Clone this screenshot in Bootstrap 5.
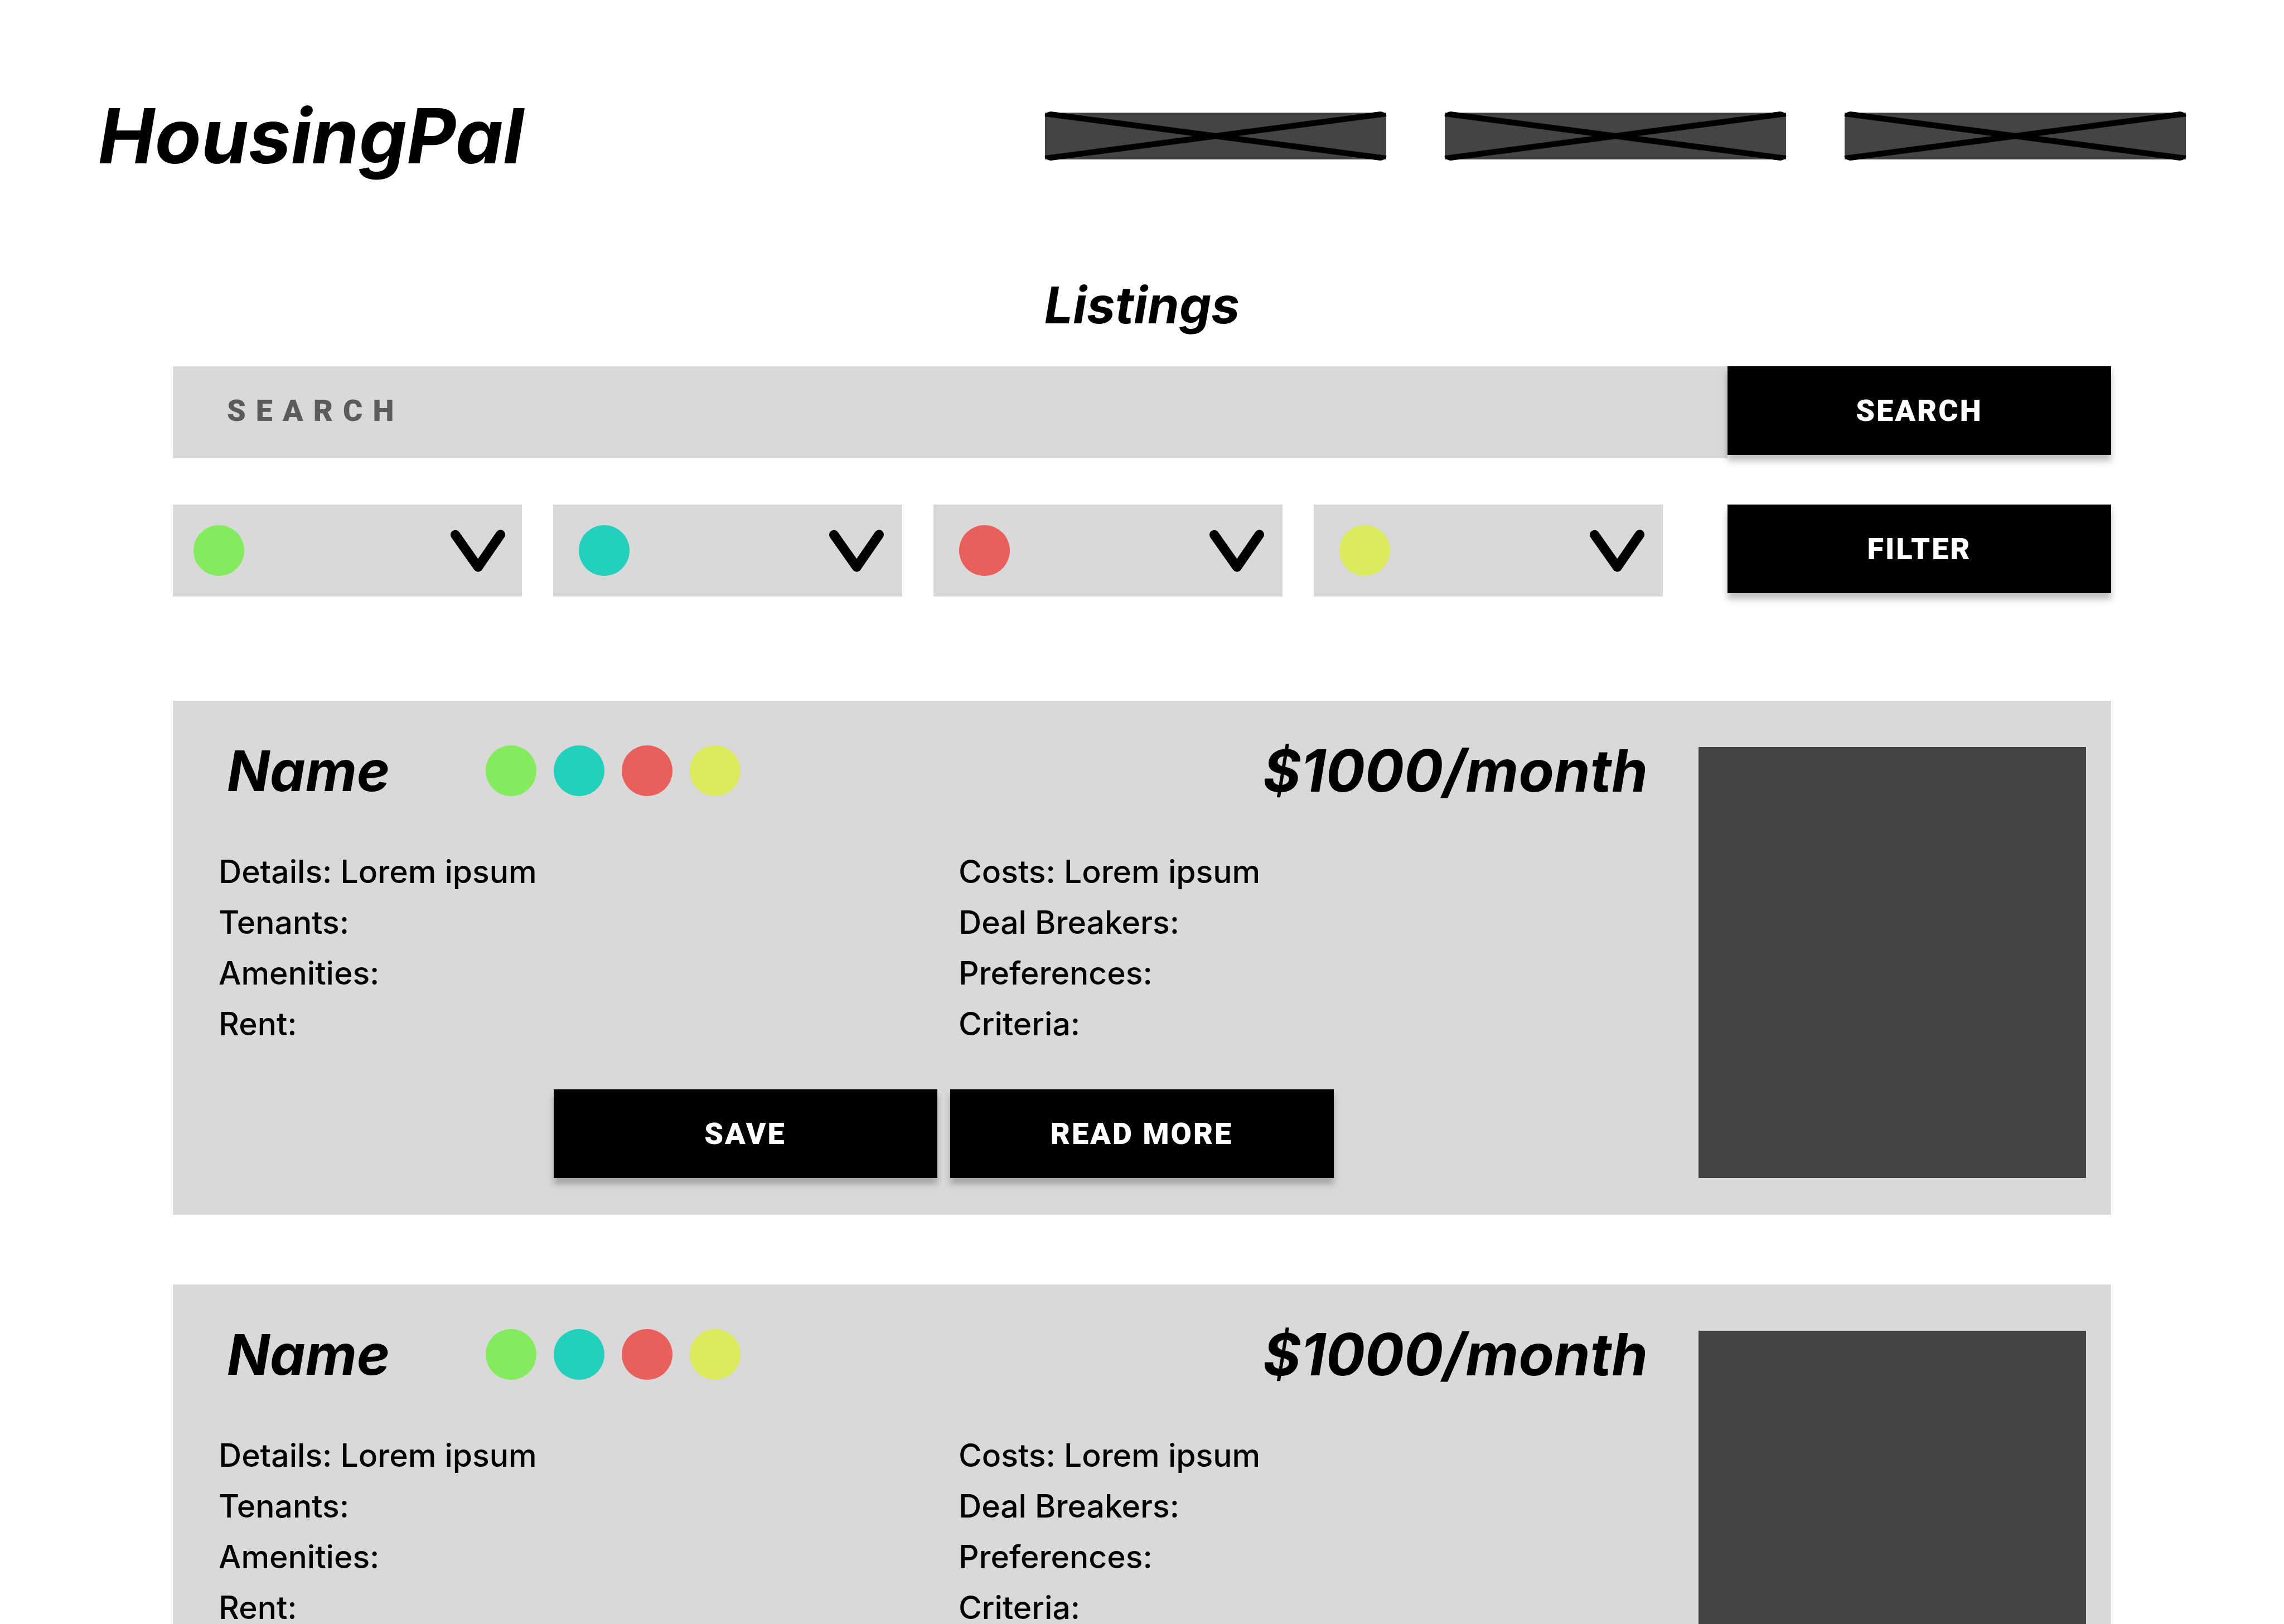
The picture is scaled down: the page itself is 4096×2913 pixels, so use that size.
<!DOCTYPE html>
<html lang="en">
<head>
<meta charset="utf-8">
<meta name="viewport" content="width=device-width, initial-scale=1">
<title>HousingPal - Listings</title>
<link href="https://cdn.jsdelivr.net/npm/bootstrap@5.3.0/dist/css/bootstrap.min.css" rel="stylesheet">
<style>
  body { font-family: Inter, sans-serif; color: #000; background: #fff; }
  .page-shell { scrollbar-width: none; }
  .site-header { padding: 162px 176px 166px; }
  .brand { font-size: 136px; line-height: 164px; }
  .nav-links { gap: 105px; }
  .nav-block { width: 612px; height: 84px; background: #444; }
  .nav-block svg { overflow: visible; }
  .content-area { padding: 0 310px 125px; }
  .page-title { font-size: 91px; line-height: 110px; margin-bottom: 55px; }
  .search-row { margin-bottom: 83px; }
  .search-box { height: 165px; padding: 0 97px 6px; background: #d9d9d9; border: 0; border-radius: 0; }
  .search-box, .action-btn { font-family: Roboto, sans-serif; font-size: 54px; font-weight: 900; line-height: 64px; }
  .search-box, .search-box::placeholder { color: #5b5b5b; opacity: 1; letter-spacing: 18px; }
  .action-btn { width: 688px; height: 159px; border: 0; border-radius: 0; color: #fff; background: #000; letter-spacing: 3px; box-shadow: 0 11px 11px rgba(0, 0, 0, .25); }
  .action-btn:hover { color: #fff; background: #222; }
  .filter-row { gap: 116px; margin-bottom: 187px; }
  .filter-set { display: grid; grid-template-columns: repeat(4, 1fr); gap: 56px; }
  .filter-box { height: 165px; padding: 0 33px 0 46px; background: #d9d9d9; }
  .filter-box:first-child { padding: 0 30px 0 37px; }
  .filter-box select { appearance: none; min-width: 0; border: 0; background: transparent; }
  .chevron { width: 98px; height: 76px; }
  .dot { width: 91px; height: 91px; }
  .dot-green { background: #84eb5f; }
  .dot-teal { background: #24d0bd; }
  .dot-red { background: #e95f5c; }
  .dot-yellow { background: #deea5d; }
  .listing-set { gap: 125px; }
  .listing { background: #d9d9d9; padding: 80px 45px 66px 0; }
  .listing-head { padding: 0 91px 0 97px; margin-bottom: 90px; line-height: 91px; }
  .listing-name { font-size: 101px; line-height: inherit; width: 464px; }
  .listing-price { font-size: 104px; }
  .dot-set { gap: 31px; }
  .facts { padding-left: 82px; margin-bottom: 72px; font-size: 57px; font-weight: 500; line-height: 91px; }
  .listing-actions { gap: 23px; padding-left: 28px; }
  .photo { width: 695px; margin-top: 3px; background: #444; }
</style>
</head>
<body>
<div class="page-shell vh-100 overflow-auto">
  <header class="site-header d-flex align-items-center justify-content-between">
    <a href="#" class="brand fw-bold fst-italic text-black text-decoration-none">HousingPal</a>
    <nav class="nav-links d-flex" aria-label="Main">
      <a href="#" class="nav-block d-block" aria-label="Menu item 1"><svg class="d-block w-100 h-100" viewBox="0 0 860 118" preserveAspectRatio="none"><path d="M0 10C-3 4 8-4 18-2.500L860 108C863 114 852 122 842 120.500Z"/><path d="M860 10C863 4 852-4 842-2.500L0 108C-3 114 8 122 18 120.500Z"/></svg></a>
      <a href="#" class="nav-block d-block" aria-label="Menu item 2"><svg class="d-block w-100 h-100" viewBox="0 0 860 118" preserveAspectRatio="none"><path d="M0 10C-3 4 8-4 18-2.500L860 108C863 114 852 122 842 120.500Z"/><path d="M860 10C863 4 852-4 842-2.500L0 108C-3 114 8 122 18 120.500Z"/></svg></a>
      <a href="#" class="nav-block d-block" aria-label="Menu item 3"><svg class="d-block w-100 h-100" viewBox="0 0 860 118" preserveAspectRatio="none"><path d="M0 10C-3 4 8-4 18-2.500L860 108C863 114 852 122 842 120.500Z"/><path d="M860 10C863 4 852-4 842-2.500L0 108C-3 114 8 122 18 120.500Z"/></svg></a>
    </nav>
  </header>

  <main class="content-area">
    <h1 class="page-title text-center fw-bold fst-italic">Listings</h1>

    <form class="search-row d-flex align-items-start" role="search">
      <input class="search-box flex-grow-1" type="text" placeholder="SEARCH" aria-label="Search listings">
      <button type="button" class="action-btn btn p-0">SEARCH</button>
    </form>

    <div class="filter-row d-flex align-items-start">
      <div class="filter-set flex-grow-1">
        <div class="filter-box d-flex align-items-center">
          <label class="dot dot-green rounded-circle" for="f1" aria-label="Green filter"></label>
          <select id="f1" class="flex-grow-1"><option></option></select>
          <svg class="chevron" viewBox="0 0 138 106" fill="none" stroke="#000" stroke-width="24" stroke-linecap="round" stroke-linejoin="round"><path d="M12 12.500L69.500 94L126 12"/></svg>
        </div>
        <div class="filter-box d-flex align-items-center">
          <label class="dot dot-teal rounded-circle" for="f2" aria-label="Teal filter"></label>
          <select id="f2" class="flex-grow-1"><option></option></select>
          <svg class="chevron" viewBox="0 0 138 106" fill="none" stroke="#000" stroke-width="24" stroke-linecap="round" stroke-linejoin="round"><path d="M12 12.500L69.500 94L126 12"/></svg>
        </div>
        <div class="filter-box d-flex align-items-center">
          <label class="dot dot-red rounded-circle" for="f3" aria-label="Red filter"></label>
          <select id="f3" class="flex-grow-1"><option></option></select>
          <svg class="chevron" viewBox="0 0 138 106" fill="none" stroke="#000" stroke-width="24" stroke-linecap="round" stroke-linejoin="round"><path d="M12 12.500L69.500 94L126 12"/></svg>
        </div>
        <div class="filter-box d-flex align-items-center">
          <label class="dot dot-yellow rounded-circle" for="f4" aria-label="Yellow filter"></label>
          <select id="f4" class="flex-grow-1"><option></option></select>
          <svg class="chevron" viewBox="0 0 138 106" fill="none" stroke="#000" stroke-width="24" stroke-linecap="round" stroke-linejoin="round"><path d="M12 12.500L69.500 94L126 12"/></svg>
        </div>
      </div>
      <button type="button" class="action-btn btn p-0">FILTER</button>
    </div>

    <div class="listing-set d-flex flex-column">
      <article class="listing d-flex">
        <div class="flex-grow-1">
          <div class="listing-head d-flex fw-bold fst-italic">
            <h2 class="listing-name fw-bold m-0">Name</h2>
            <div class="dot-set d-flex">
              <span class="dot dot-green rounded-circle"></span>
              <span class="dot dot-teal rounded-circle"></span>
              <span class="dot dot-red rounded-circle"></span>
              <span class="dot dot-yellow rounded-circle"></span>
            </div>
            <div class="listing-price ms-auto">$1000/month</div>
          </div>
          <div class="facts">
            <div class="row g-0">
              <div class="col-6">
                <div>Details: Lorem ipsum</div>
                <div>Tenants:</div>
                <div>Amenities:</div>
                <div>Rent:</div>
              </div>
              <div class="col-6">
                <div>Costs: Lorem ipsum</div>
                <div>Deal Breakers:</div>
                <div>Preferences:</div>
                <div>Criteria:</div>
              </div>
            </div>
          </div>
          <div class="listing-actions d-flex justify-content-center">
            <button type="button" class="action-btn btn p-0">SAVE</button>
            <button type="button" class="action-btn btn p-0">READ MORE</button>
          </div>
        </div>
        <div class="photo flex-shrink-0"></div>
      </article>

      <article class="listing d-flex">
        <div class="flex-grow-1">
          <div class="listing-head d-flex fw-bold fst-italic">
            <h2 class="listing-name fw-bold m-0">Name</h2>
            <div class="dot-set d-flex">
              <span class="dot dot-green rounded-circle"></span>
              <span class="dot dot-teal rounded-circle"></span>
              <span class="dot dot-red rounded-circle"></span>
              <span class="dot dot-yellow rounded-circle"></span>
            </div>
            <div class="listing-price ms-auto">$1000/month</div>
          </div>
          <div class="facts">
            <div class="row g-0">
              <div class="col-6">
                <div>Details: Lorem ipsum</div>
                <div>Tenants:</div>
                <div>Amenities:</div>
                <div>Rent:</div>
              </div>
              <div class="col-6">
                <div>Costs: Lorem ipsum</div>
                <div>Deal Breakers:</div>
                <div>Preferences:</div>
                <div>Criteria:</div>
              </div>
            </div>
          </div>
          <div class="listing-actions d-flex justify-content-center">
            <button type="button" class="action-btn btn p-0">SAVE</button>
            <button type="button" class="action-btn btn p-0">READ MORE</button>
          </div>
        </div>
        <div class="photo flex-shrink-0"></div>
      </article>
    </div>
  </main>
</div>
<script src="https://cdn.jsdelivr.net/npm/bootstrap@5.3.0/dist/js/bootstrap.bundle.min.js"></script>
</body>
</html>
